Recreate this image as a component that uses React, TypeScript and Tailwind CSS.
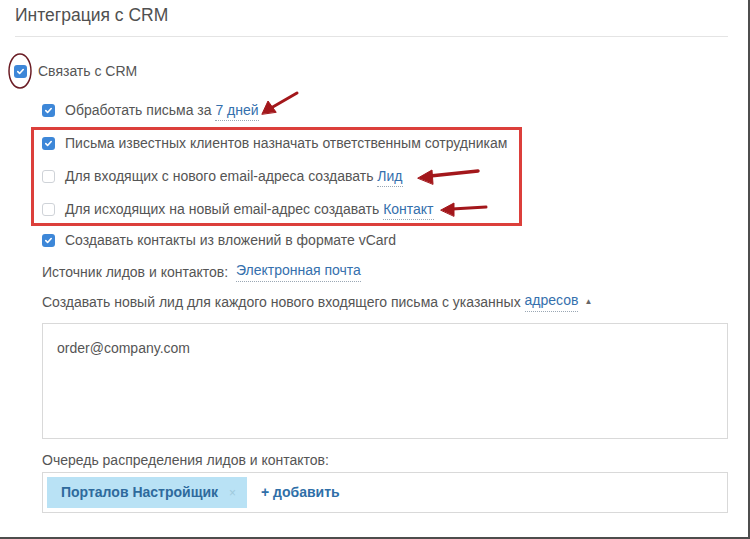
import React from "react";

function Check({ on }: { on: boolean }) {
  if (!on) {
    return <span className="w-[13px] h-[13px] shrink-0 rounded-[3px] border border-[#cfd3d8] bg-white" />;
  }
  return (
    <span className="w-[13px] h-[13px] shrink-0 rounded-[3px] bg-[#3d87d8] flex items-center justify-center">
      <svg width="9" height="9" viewBox="0 0 10 10" fill="none">
        <path d="M2 5.2l2 2L8 2.8" stroke="white" strokeWidth="1.8" strokeLinecap="round" strokeLinejoin="round" />
      </svg>
    </span>
  );
}

function Link({ children }: { children: React.ReactNode }) {
  return (
    <span className="text-[#3570ad] border-b border-dotted border-[#9aa7b4] pb-[2px] leading-[17px]">{children}</span>
  );
}

function Row({ on, children, className = "" }: { on: boolean; children: React.ReactNode; className?: string }) {
  return (
    <div className={`flex items-center gap-[10px] h-[20px] ${className}`}>
      <Check on={on} />
      <span className="whitespace-nowrap">{children}</span>
    </div>
  );
}

export default function App() {
  return (
    <div className="relative w-[750px] h-[539px] bg-white border-r-2 border-b-2 border-[#4d4d4d] font-['Liberation_Sans',sans-serif] text-[14px] text-[#555] overflow-hidden">
      <div className="pl-[15px] pr-[20px]">
        <div className="h-[37px] border-b border-[#e4e4e4] pt-[4px]">
          <h1 className="text-[17.5px] leading-[22px] text-[#505050]">Интеграция с CRM</h1>
        </div>

        <div className="mt-[24px] flex items-center gap-[11px] h-[20px] ml-[-1px]">
          <Check on />
          <span>Связать с CRM</span>
        </div>

        <Row on className="mt-[19px] ml-[27px]">
          Обработать письма за <Link>7 дней</Link>
        </Row>

        <div className="mt-[7px] ml-[16px] w-[491px] border-[3px] border-[#dc3f3b] pl-[8px] pt-[3px] pb-[4px] flex flex-col gap-[13px]">
          <Row on>Письма известных клиентов назначать ответственным сотрудникам</Row>
          <Row on={false}>
            Для входящих с нового email-адреса создавать <Link>Лид</Link>
          </Row>
          <Row on={false}>
            Для исходящих на новый email-адрес создавать <Link>Контакт</Link>
          </Row>
        </div>

        <Row on className="mt-[4px] ml-[27px]">
          Создавать контакты из вложений в формате vCard
        </Row>

        <div className="mt-[12px] ml-[27px] h-[20px] flex items-center whitespace-nowrap">
          Источник лидов и контактов:&nbsp;&nbsp;<Link>Электронная почта</Link>
        </div>

        <div className="mt-[10px] ml-[27px] h-[20px] flex items-center whitespace-nowrap">
          Создавать новый лид для каждого нового входящего письма с указанных&nbsp;<Link>адресов</Link>
          <span className="ml-[6px] text-[8px] text-[#666]">▲</span>
        </div>

        <div className="mt-[11px] ml-[27px] w-[686px] h-[116px] border border-[#d9d9d9] px-[14px] pt-[14px]">
          <span className="leading-[20px]">order@company.com</span>
        </div>

        <div className="mt-[11px] ml-[27px] h-[20px] flex items-center">Очередь распределения лидов и контактов:</div>

        <div className="mt-[2px] ml-[27px] w-[686px] h-[41px] border border-[#d9d9d9] p-[4px] flex items-center">
          <div className="w-[200px] h-[31px] bg-[#b9e2f5] flex items-center pl-[14px] gap-[11px]">
            <span className="font-bold text-[#2e6a9c] whitespace-nowrap">Порталов Настройщик</span>
            <span className="text-[#9fc9dc] text-[12px]">×</span>
          </div>
          <span className="ml-[14px] font-bold text-[#2f6fa8]">+ добавить</span>
        </div>
      </div>

      {/* annotations */}
      <svg className="absolute inset-0 pointer-events-none" width="750" height="539">
        <ellipse cx="20" cy="71" rx="11" ry="17" fill="none" stroke="#6a1c24" strokeWidth="1.5" />
        <g fill="#a3171b" stroke="#a3171b" strokeLinecap="round">
          <line x1="297" y1="93" x2="271" y2="108" strokeWidth="3" />
          <polygon points="262,114 268,101 276,112" strokeWidth="1" strokeLinejoin="round" />
          <line x1="478" y1="171" x2="430" y2="176" strokeWidth="3.5" />
          <polygon points="418,178 432,170 433,184" strokeWidth="1" strokeLinejoin="round" />
          <line x1="486" y1="207" x2="452" y2="209" strokeWidth="3" />
          <polygon points="441,210 454,203 454,216" strokeWidth="1" strokeLinejoin="round" />
        </g>
      </svg>
    </div>
  );
}
